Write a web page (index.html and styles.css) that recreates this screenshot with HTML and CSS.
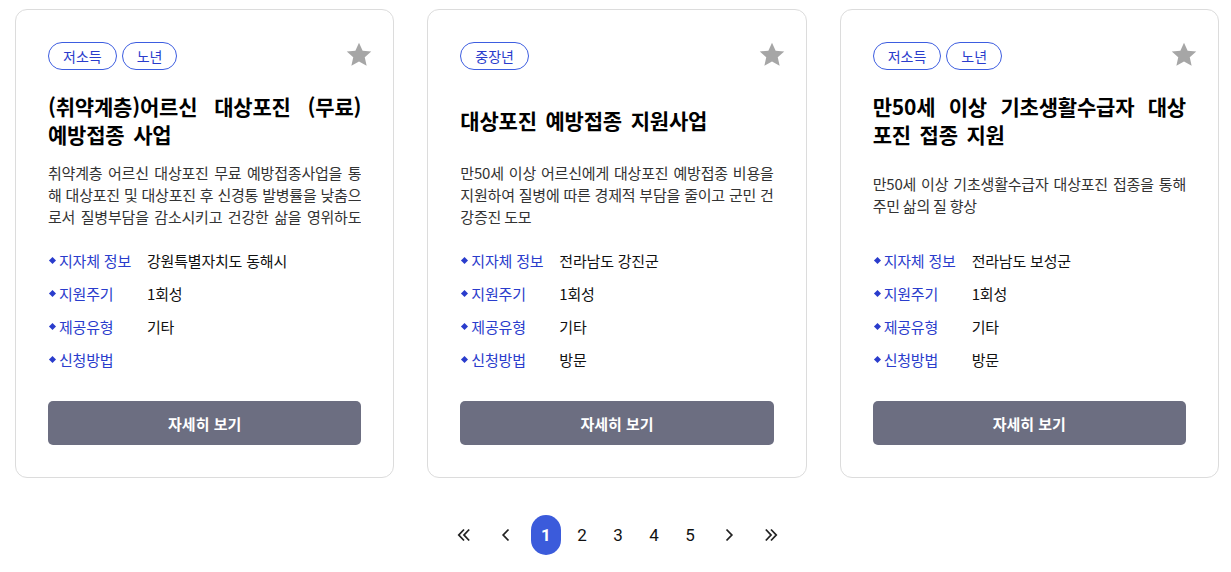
FILE: index.html
```html
<!DOCTYPE html>
<html lang="ko">
<head>
<meta charset="utf-8">
<title>지원사업 목록</title>
<link rel="stylesheet" href="styles.css">
</head>
<body>
<main class="page">
  <section class="cards">
    <article class="card">
      <div class="card-head">
        <div class="tags"><span class="tag">저소득</span><span class="tag">노년</span></div>
        <svg class="star" viewBox="0 0 24 24" width="30" height="30"><path d="M12 2.2l2.9 6.3 6.9.7-5.2 4.6 1.5 6.8L12 17.1l-6.1 3.5 1.5-6.8-5.2-4.6 6.9-.7z" fill="#a6a6a6"/></svg>
      </div>
      <h2 class="title"><span>(취약계층)어르신 대상포진 (무료) 예방접종 사업</span></h2>
      <div class="desc"><p>취약계층 어르신 대상포진 무료 예방접종사업을 통해 대상포진 및 대상포진 후 신경통 발병률을 낮춤으로서 질병부담을 감소시키고 건강한 삶을 영위하도록 함</p></div>
      <ul class="info">
        <li><span class="label">지자체 정보</span><span class="value">강원특별자치도 동해시</span></li>
        <li><span class="label">지원주기</span><span class="value">1회성</span></li>
        <li><span class="label">제공유형</span><span class="value">기타</span></li>
        <li><span class="label">신청방법</span><span class="value"></span></li>
      </ul>
      <button class="more" type="button">자세히 보기</button>
    </article>
    <article class="card">
      <div class="card-head">
        <div class="tags"><span class="tag">중장년</span></div>
        <svg class="star" viewBox="0 0 24 24" width="30" height="30"><path d="M12 2.2l2.9 6.3 6.9.7-5.2 4.6 1.5 6.8L12 17.1l-6.1 3.5 1.5-6.8-5.2-4.6 6.9-.7z" fill="#a6a6a6"/></svg>
      </div>
      <h2 class="title"><span>대상포진 예방접종 지원사업</span></h2>
      <div class="desc"><p>만50세 이상 어르신에게 대상포진 예방접종 비용을 지원하여 질병에 따른 경제적 부담을 줄이고 군민 건강증진 도모</p></div>
      <ul class="info">
        <li><span class="label">지자체 정보</span><span class="value">전라남도 강진군</span></li>
        <li><span class="label">지원주기</span><span class="value">1회성</span></li>
        <li><span class="label">제공유형</span><span class="value">기타</span></li>
        <li><span class="label">신청방법</span><span class="value">방문</span></li>
      </ul>
      <button class="more" type="button">자세히 보기</button>
    </article>
    <article class="card">
      <div class="card-head">
        <div class="tags"><span class="tag">저소득</span><span class="tag">노년</span></div>
        <svg class="star" viewBox="0 0 24 24" width="30" height="30"><path d="M12 2.2l2.9 6.3 6.9.7-5.2 4.6 1.5 6.8L12 17.1l-6.1 3.5 1.5-6.8-5.2-4.6 6.9-.7z" fill="#a6a6a6"/></svg>
      </div>
      <h2 class="title"><span>만50세 이상 기초생활수급자 대상포진 접종 지원</span></h2>
      <div class="desc"><p>만50세 이상 기초생활수급자 대상포진 접종을 통해 주민 삶의 질 향상</p></div>
      <ul class="info">
        <li><span class="label">지자체 정보</span><span class="value">전라남도 보성군</span></li>
        <li><span class="label">지원주기</span><span class="value">1회성</span></li>
        <li><span class="label">제공유형</span><span class="value">기타</span></li>
        <li><span class="label">신청방법</span><span class="value">방문</span></li>
      </ul>
      <button class="more" type="button">자세히 보기</button>
    </article>
  </section>
  <nav class="pager">
    <a class="pg arrow first" href="#"><svg viewBox="0 0 16 16" width="16" height="16"><path d="M8 2.5L2.8 8 8 13.5M13.2 2.5L8 8l5.2 5.5" fill="none" stroke="#222" stroke-width="1.8"/></svg></a>
    <a class="pg arrow prev" href="#"><svg viewBox="0 0 16 16" width="16" height="16"><path d="M10.5 2.5L5.2 8l5.3 5.5" fill="none" stroke="#222" stroke-width="1.8"/></svg></a>
    <a class="pg num active" href="#">1</a>
    <a class="pg num" href="#">2</a>
    <a class="pg num" href="#">3</a>
    <a class="pg num" href="#">4</a>
    <a class="pg num" href="#">5</a>
    <a class="pg arrow next" href="#"><svg viewBox="0 0 16 16" width="16" height="16"><path d="M5.5 2.5L10.8 8l-5.3 5.5" fill="none" stroke="#222" stroke-width="1.8"/></svg></a>
    <a class="pg arrow last" href="#"><svg viewBox="0 0 16 16" width="16" height="16"><path d="M2.8 2.5L8 8l-5.2 5.5M8 2.5L13.2 8 8 13.5" fill="none" stroke="#222" stroke-width="1.8"/></svg></a>
  </nav>
</main>
</body>
</html>
```

FILE: styles.css
```css
* { box-sizing: border-box; }

body {
  margin: 0;
  background: #fff;
  font-family: "Noto Sans CJK KR", "Noto Sans", sans-serif;
  color: #111;
}

.page {
  width: 1204px;
  margin-left: 15px;
  padding-top: 9px;
}

.cards {
  display: grid;
  grid-template-columns: repeat(3, 1fr);
  gap: 33px;
}

.card {
  border: 1px solid #dcdcdc;
  border-radius: 12px;
  padding: 32px 32px 32px 32px;
  display: flex;
  flex-direction: column;
}

.card-head {
  display: flex;
  justify-content: space-between;
  align-items: flex-start;
  height: 28px;
}

.tags { display: flex; gap: 5px; }

.tag {
  height: 28px;
  padding: 0 14px;
  border: 1px solid #3d5de0;
  border-radius: 14px;
  font-size: 14px;
  line-height: 26px;
  color: #2a3ccc;
}

.star {
  margin: -2px -13px 0 0;
}

.title {
  margin: 22px 0 0;
  height: 56px;
  display: flex;
  align-items: center;
  font-size: 21px;
  line-height: 28px;
  font-weight: 700;
  letter-spacing: -0.2px;
  word-spacing: 3px;
  text-align: justify;
  color: #000;
}

.desc {
  margin-top: 11px;
  height: 72px;
  display: flex;
  align-items: center;
}

.desc p {
  margin: 0;
  max-height: 66px;
  overflow: hidden;
  font-size: 15px;
  line-height: 22px;
  letter-spacing: -0.2px;
  word-spacing: -1px;
  color: #333;
  text-align: justify;
}

.info {
  list-style: none;
  margin: 13px 0 0;
  padding: 0;
}

.info li {
  display: flex;
  align-items: center;
  height: 33px;
  font-size: 15px;
  letter-spacing: -0.2px;
}

.label {
  position: relative;
  width: 99px;
  padding-left: 11px;
  color: #2a3ccc;
}

.label::before {
  content: "";
  position: absolute;
  left: 2px;
  top: 50%;
  width: 5px;
  height: 5px;
  margin-top: -3px;
  background: #2a3ccc;
  transform: rotate(45deg);
}

.value { color: #111; }

.more {
  margin-top: 25px;
  height: 44px;
  border: 0;
  border-radius: 5px;
  background: #6c6e81;
  color: #fff;
  font-family: inherit;
  font-size: 15px;
  font-weight: 700;
}

.pager {
  display: flex;
  justify-content: center;
  align-items: center;
  gap: 6px;
  margin-top: 37px;
  padding-left: 1px;
}

.pg {
  width: 30px;
  height: 40px;
  display: flex;
  align-items: center;
  justify-content: center;
  text-decoration: none;
  color: #111;
  font-family: Roboto, "Noto Sans", sans-serif;
  font-size: 17px;
}

.pg.active {
  background: #3b5bdb;
  color: #fff;
  font-weight: 700;
  border-radius: 15px;
}

.first { margin-right: 6px; }
.prev { margin-right: 4px; }
.next { margin-left: 3px; }
.last { margin-left: 6px; }
```
